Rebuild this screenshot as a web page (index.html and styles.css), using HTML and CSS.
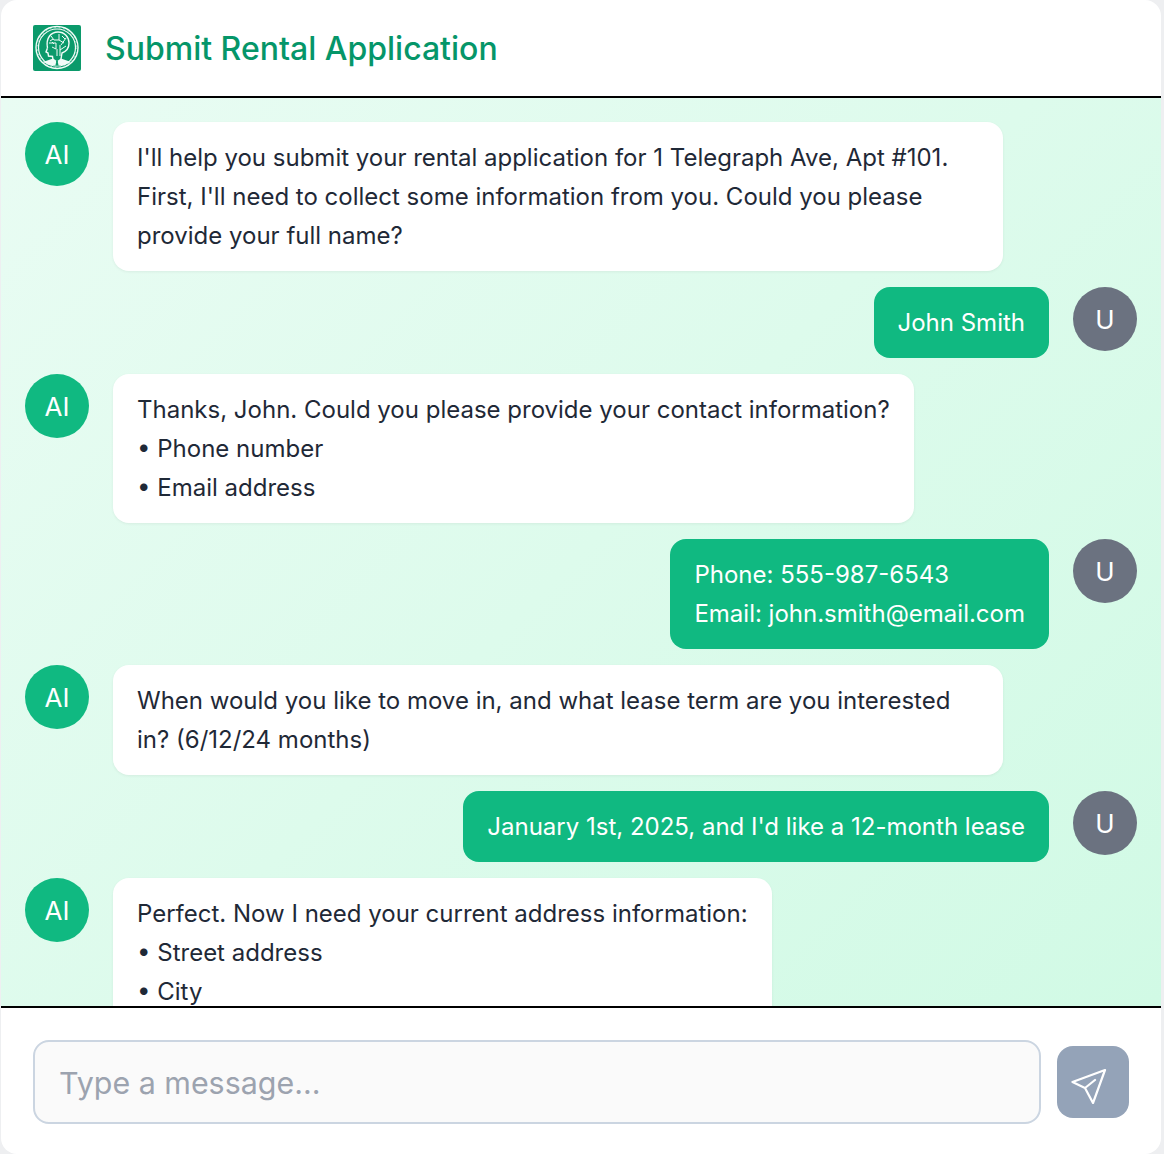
FILE: index.html
```html
<!DOCTYPE html>
<html lang="en">
<head>
  <meta charset="UTF-8">
  <title>Submit Rental Application</title>
  <meta name="viewport" content="width=device-width, initial-scale=1.0">
  <link rel="stylesheet" href="styles.css">
</head>
<body>

<div class="card">
  <header class="header">
    <svg class="logo" viewBox="0 0 48 46" aria-hidden="true">
      <rect width="48" height="46" rx="2" fill="#0b9a6b"/>
      <circle cx="24" cy="22.500" r="21" fill="none" stroke="#f4fbf8" stroke-width="1.400"/>
      <circle cx="24" cy="22.500" r="18.500" fill="none" stroke="#f4fbf8" stroke-width="1.200"/>
      <circle cx="24" cy="22.500" r="19.800" fill="none" stroke="#f4fbf8" stroke-width=".6" stroke-dasharray="1.500 3"/>
      <path d="M14.500 23 C12.500 13 18 7 25 7 C31.500 7 36 12 36 18 C36 23 33 26.500 29 28 L28 34 M14.500 23 L13 27 L15 28 L15.500 31 L19.500 31.500 L20 35" fill="none" stroke="#f4fbf8" stroke-width="1.400"/>
      <path d="M18 11 L21 15 H26 M26 9 V15 L31 18 M16 18 H23 V24 M33 13 L28 20 M19 22 L23 24 M24 24 V31 M27 20 V31 M33 21 L27 25 M20 14 L17 16 M29 11 L32 14 M21 19 L19 17" fill="none" stroke="#f4fbf8" stroke-width="1"/>
      <path d="M10 37 L20 33.500 L24 36 L28 33.500 L38 37 L32 40 H16 Z" fill="#f4fbf8"/>
      <path d="M22.800 35.500 H25.200 L24.800 37 L25.600 40.500 H22.400 L23.200 37 Z" fill="#0b9a6b"/>
    </svg>
    <h1 class="title">Submit Rental Application</h1>
  </header>

  <main class="messages">
    <div class="row">
      <div class="avatar ai">AI</div>
      <div class="bubble bot">I'll help you submit your rental application for 1 Telegraph Ave, Apt #101. First, I'll need to collect some information from you. Could you please provide your full name?</div>
    </div>
    <div class="row mine">
      <div class="bubble user">John Smith</div>
      <div class="avatar me">U</div>
    </div>
    <div class="row">
      <div class="avatar ai">AI</div>
      <div class="bubble bot">Thanks, John. Could you please provide your contact information?<br>• Phone number<br>• Email address</div>
    </div>
    <div class="row mine">
      <div class="bubble user">Phone: 555-987-6543<br>Email: john.smith@email.com</div>
      <div class="avatar me">U</div>
    </div>
    <div class="row">
      <div class="avatar ai">AI</div>
      <div class="bubble bot">When would you like to move in, and what lease term are you interested in? (6/12/24 months)</div>
    </div>
    <div class="row mine">
      <div class="bubble user">January 1st, 2025, and I'd like a 12-month lease</div>
      <div class="avatar me">U</div>
    </div>
    <div class="row">
      <div class="avatar ai">AI</div>
      <div class="bubble bot">Perfect. Now I need your current address information:<br>• Street address<br>• City</div>
    </div>
  </main>

  <footer class="composer">
    <input class="field" type="text" placeholder="Type a message...">
    <button class="send" aria-label="Send">
      <svg viewBox="0 0 44 44" width="44" height="44" aria-hidden="true">
        <path d="M34 10 1.500 22 14 28 22 43Z M14 28 24 20" fill="none" stroke="#fff" stroke-width="2.200" stroke-linejoin="round" stroke-linecap="round"/>
      </svg>
    </button>
  </footer>
</div>

</body>
</html>
```

FILE: styles.css
```css
* {
  box-sizing: border-box;
}
html, body {
  height: 100%;
}
body {
  margin: 0;
  padding: 0 3px 0 1px;
  background: #eeeff1;
  font-family: Inter, "Liberation Sans", sans-serif;
  overflow: hidden;
}
.card {
  display: flex;
  flex-direction: column;
  height: 1154px;
  background: #fff;
  border-radius: 16px;
  overflow: hidden;
}
.header {
  flex: none;
  display: flex;
  align-items: center;
  gap: 24px;
  height: 98px;
  padding: 0 32px;
  border-bottom: 2px solid #000;
}
.logo {
  flex: none;
  width: 48px;
  height: 46px;
}
.title {
  margin: 0;
  font-size: 32px;
  font-weight: 500;
  color: #059669;
}
.messages {
  flex: 1;
  min-height: 0;
  display: flex;
  flex-direction: column;
  gap: 16px;
  padding: 24px;
  overflow: hidden;
  background: linear-gradient(135deg, #e9fcf3, #d1fae5);
}
.row {
  display: flex;
  flex: none;
  align-items: flex-start;
  gap: 24px;
}
.row.mine {
  justify-content: flex-end;
}
.avatar {
  flex: none;
  display: flex;
  align-items: center;
  justify-content: center;
  width: 64px;
  height: 64px;
  border-radius: 50%;
  color: #fff;
  font-size: 26px;
}
.avatar.ai {
  background: #10b981;
}
.avatar.me {
  background: #6b7280;
}
.bubble {
  max-width: 80%;
  padding: 16px 24px;
  border-radius: 16px;
  font-size: 24px;
  line-height: 39px;
}
.bot {
  background: #fff;
  color: #1f2937;
  box-shadow: 0 1px 3px rgba(0, 0, 0, .06);
}
.user {
  background: #10b981;
  color: #fff;
}
.composer {
  flex: none;
  display: flex;
  align-items: center;
  gap: 16px;
  height: 148px;
  padding: 2px 32px 0;
  border-top: 2px solid #000;
}
.field {
  flex: 1;
  min-width: 0;
  height: 84px;
  padding: 2px 24px 0;
  border: 2px solid #cbd5e1;
  border-radius: 16px;
  background: #fafafa;
  font-family: inherit;
  font-size: 30.400px;
  color: #1f2937;
}
.field::placeholder {
  color: #9ca3af;
}
.send {
  flex: none;
  display: flex;
  align-items: center;
  justify-content: center;
  width: 72px;
  height: 72px;
  padding: 0;
  border: none;
  border-radius: 16px;
  background: #94a3b8;
}
```
